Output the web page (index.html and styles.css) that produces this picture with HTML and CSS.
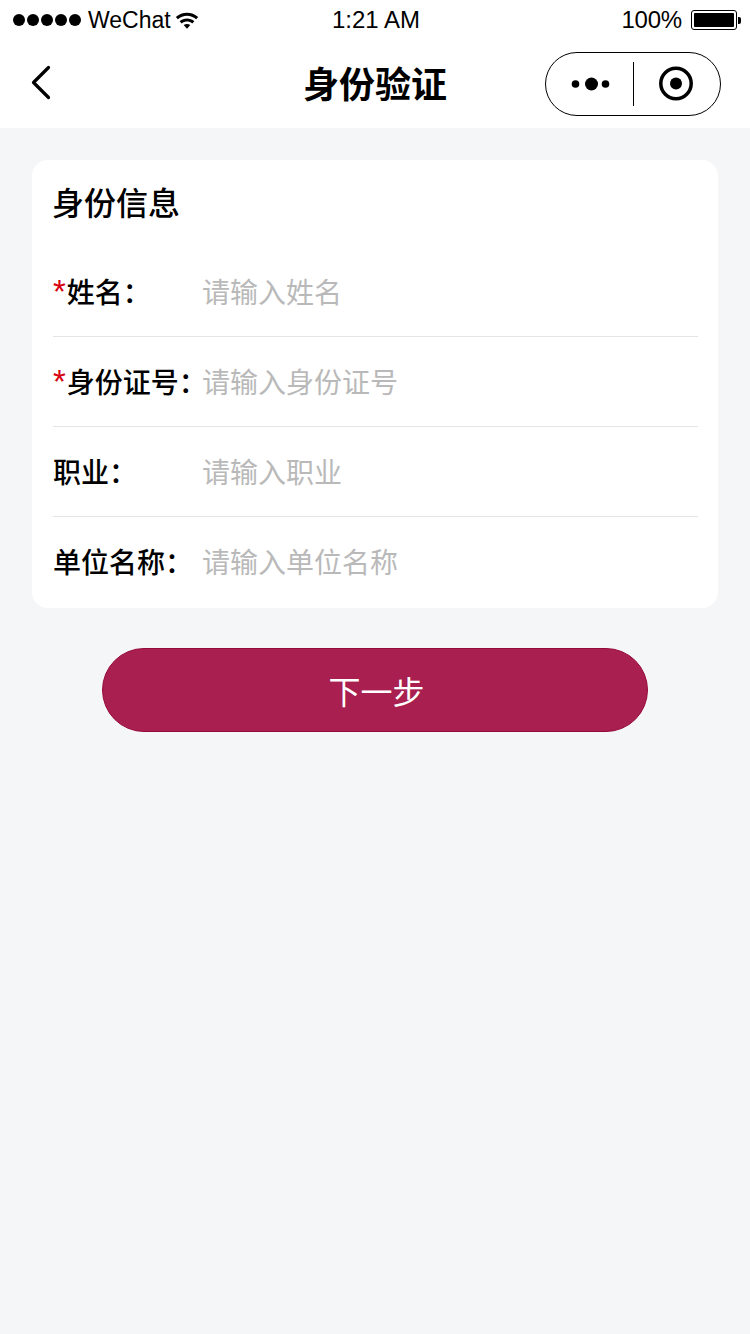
FILE: index.html
```html
<!DOCTYPE html>
<html lang="zh-CN">
  <head>
    <meta charset="UTF-8" />
    <title>身份验证</title>
    <link rel="stylesheet" href="styles.css">
  </head>
  <body>
    <div class="status-bar">
      <div class="status-left">
        <span class="signal"><i></i><i></i><i></i><i></i><i></i></span>
        <span class="carrier">WeChat</span>
        <svg class="wifi" width="24" height="18" viewBox="0 0 24 18">
          <path d="M.8 6C7 .2 17 .2 23.200 6l-2.100 2.300C16 3.600 8 3.600 2.900 8.300z" fill="#000"/>
          <path d="M4.600 10.200c4.200-3.700 10.600-3.700 14.800 0l-2.200 2.300c-3-2.600-7.400-2.600-10.400 0z" fill="#000"/>
          <path d="M8.700 14.100c2-1.500 4.600-1.500 6.600 0L12 17.800z" fill="#000"/>
        </svg>
      </div>
      <div class="status-time">1:21 AM</div>
      <div class="status-right">
        <span class="percent">100%</span>
        <span class="battery"><span class="battery-fill"></span></span>
        <span class="battery-tip"></span>
      </div>
    </div>

    <div class="nav-bar">
      <svg class="back" width="24" height="38" viewBox="0 0 24 38">
        <path d="M19.500 2.500 L4.500 17.500 L19.500 32.500" fill="none" stroke="#000" stroke-width="3.200" stroke-linecap="round" stroke-linejoin="round"/>
      </svg>
      <div class="nav-title">身份验证</div>
      <div class="capsule">
        <div class="capsule-part">
          <svg width="42" height="16" viewBox="0 0 42 16">
            <circle cx="7.500" cy="8" r="3.800" fill="#000"/>
            <circle cx="23.500" cy="8" r="6.500" fill="#000"/>
            <circle cx="37.500" cy="8" r="3.800" fill="#000"/>
          </svg>
        </div>
        <div class="capsule-line"></div>
        <div class="capsule-part">
          <svg width="36" height="36" viewBox="0 0 36 36">
            <circle cx="17" cy="17.500" r="15.200" fill="none" stroke="#000" stroke-width="3.500"/>
            <circle cx="17" cy="17.500" r="6" fill="#000"/>
          </svg>
        </div>
      </div>
    </div>

    <div class="content">
      <div class="card">
        <h2 class="card-title">身份信息</h2>
        <div class="row">
          <label class="label"><span class="star">*</span>姓名：</label>
          <input class="field" placeholder="请输入姓名">
        </div>
        <div class="row">
          <label class="label"><span class="star">*</span>身份证号：</label>
          <input class="field" placeholder="请输入身份证号">
        </div>
        <div class="row">
          <label class="label">职业：</label>
          <input class="field" placeholder="请输入职业">
        </div>
        <div class="row">
          <label class="label">单位名称：</label>
          <input class="field" placeholder="请输入单位名称">
        </div>
      </div>
      <button class="next-btn">下一步</button>
    </div>
  </body>
</html>
```

FILE: styles.css
```css
* {
  box-sizing: border-box;
}

body {
  margin: 0;
  min-height: 1334px;
  background-color: #f5f6f8;
  color: #000;
  font-family: "Liberation Sans", "Noto Sans CJK SC", sans-serif;
}

.status-bar {
  height: 40px;
  padding: 0 9px 0 13px;
  background-color: #fff;
  display: grid;
  grid-template-columns: 1fr auto 1fr;
  align-items: center;
  font-size: 24px;
}

.status-left {
  display: flex;
  align-items: center;
}

.signal {
  display: flex;
  gap: 2px;
  margin-right: 7px;
}

.signal i {
  width: 12px;
  height: 12px;
  border-radius: 50%;
  background-color: #000;
}

.carrier {
  font-size: 23px;
}

.wifi {
  margin-left: 4px;
}

.status-time {
  margin-left: -2px;
}

.status-right {
  display: flex;
  align-items: center;
  justify-content: flex-end;
}

.percent {
  letter-spacing: -0.2px;
}

.battery {
  width: 46px;
  height: 20px;
  margin-left: 9px;
  padding: 2px;
  border: 1px solid #000;
  border-radius: 3px;
  display: flex;
}

.battery-fill {
  flex: 1;
  border-radius: 1px;
  background-color: #000;
}

.battery-tip {
  width: 3px;
  height: 7px;
  margin-left: 1px;
  border-radius: 0 2px 2px 0;
  background-color: #000;
}

.nav-bar {
  height: 88px;
  padding: 0 29px;
  background-color: #fff;
  display: grid;
  grid-template-columns: 1fr auto 1fr;
  align-items: center;
}

.nav-title {
  margin-top: -4px;
  font-size: 36px;
  font-weight: 700;
}

.capsule {
  justify-self: end;
  width: 176px;
  height: 64px;
  margin-top: -1px;
  border: 1px solid #000;
  border-radius: 32px;
  display: flex;
  align-items: center;
}

.capsule-part {
  flex: 1;
  display: flex;
  justify-content: center;
}

.capsule-line {
  width: 1px;
  height: 44px;
  background-color: #000;
}

.content {
  padding: 32px 32px 0;
}

.card {
  padding: 0 20px 1px 21px;
  background-color: #fff;
  border-radius: 16px;
}

.card-title {
  margin: 0 0 0 -1px;
  height: 87px;
  font-size: 32px;
  font-weight: 500;
  line-height: 88px;
}

.row {
  height: 90px;
  display: flex;
  align-items: center;
  border-bottom: 1px solid #e5e5e5;
}

.row:last-child {
  border-bottom: none;
}

.label {
  width: 150px;
  padding-bottom: 2px;
  font-size: 28px;
  font-weight: 500;
  white-space: nowrap;
}

.star {
  margin-right: 1px;
  color: #d9000f;
  font-size: 33px;
  line-height: 28px;
}

.field {
  flex: 1;
  min-width: 0;
  margin-left: -1px;
  padding: 4px 0 0;
  border: none;
  outline: none;
  font-family: inherit;
  font-size: 28px;
  background: transparent;
}

.field::placeholder {
  color: #b9b9b9;
  opacity: 1;
}

.next-btn {
  display: block;
  width: 546px;
  height: 84px;
  margin: 40px auto 0;
  padding-left: 9px;
  border: 1px solid #96093a;
  border-radius: 42px;
  background-color: #a81f50;
  color: #fff;
  font-family: inherit;
  font-size: 32px;
}
```
